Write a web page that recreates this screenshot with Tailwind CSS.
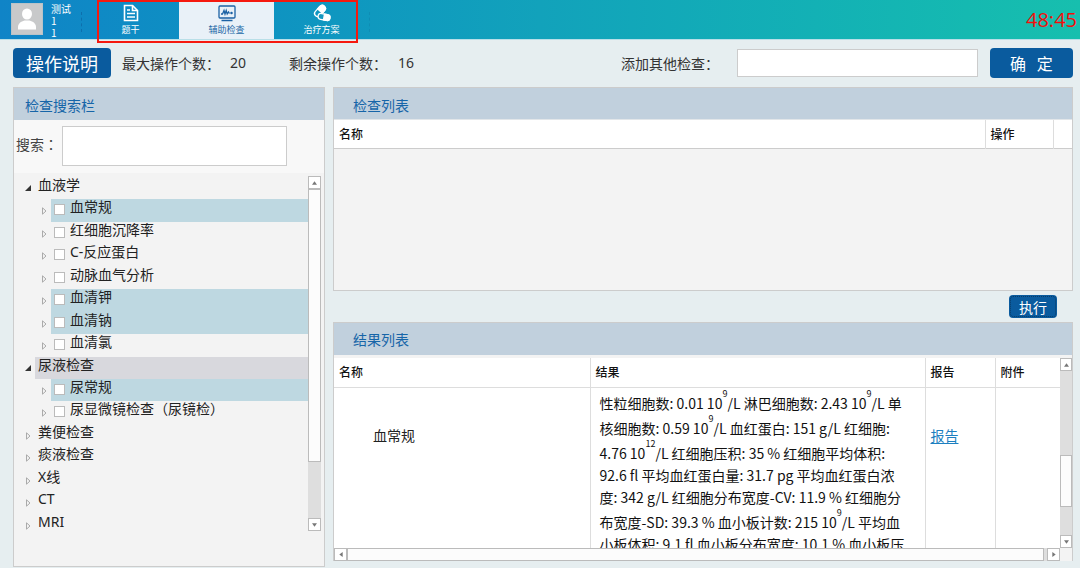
<!DOCTYPE html>
<html lang="zh-CN">
<head>
<meta charset="utf-8">
<meta name="viewport" content="width=device-width, initial-scale=1">
<title>辅助检查</title>
<script src="https://cdn.jsdelivr.net/npm/@tailwindcss/browser@4"></script>
</head>
<body class="min-h-screen bg-[#e6eef0] font-['Noto_Sans_CJK_SC',sans-serif] text-sm text-[#222]">
<header class="flex h-10 items-start border-b border-[#b9dfe8] bg-linear-to-r from-[#1084c7] via-[#12a2bb] to-[#17bfae]">
  <div class="ml-[11px] mt-[3px] h-8 w-8 shrink-0 border border-[#b9c3c8] bg-[#c8c9ca]">
    <svg viewBox="0 0 30 30" class="h-full w-full" fill="#fff" role="img" aria-label="头像"><ellipse cx="15" cy="10" rx="5" ry="5.5"/><path d="M6 25.500v-2.500c0-3.500 3-5.500 6.500-6.500h5c3.500 1 6.500 3 6.500 6.500v2.500z"/></svg>
  </div>
  <div class="ml-2 mt-[3px] w-[30px] text-[10px] leading-3 text-white"><div>测试</div><div>1</div><div>1</div></div>
  <div class="mt-3 h-5 border-l border-dashed border-[#0b5f9d]/60"></div>
  <nav class="relative ml-4 flex h-[39px] text-[9px] leading-3 text-white">
    <a href="#" class="flex w-[81px] flex-col items-center pr-4 pt-1">
      <svg viewBox="0 0 16 18" class="mb-0.5 h-[18px] w-4" fill="none" stroke="#fff" stroke-width="1.600"><path d="M1.500 1.500h8l5 5v10h-13z"/><path d="M9.500 1.500v5h5M4 6h3M4 9.500h8M4 13h8"/></svg>
      <span>题干</span></a>
    <a href="#" aria-current="page" class="flex w-[95px] flex-col items-center bg-[#e9f1f8] pt-1 text-[#2468a6]">
      <svg viewBox="0 0 18 18" class="mb-0.5 h-[18px] w-[18px]" fill="none" stroke="#1c62a4" stroke-width="1.300"><rect x="1" y="2" width="16" height="12" rx="1"/><path d="M3 10h1.500L6 6.500 7 10l1.200-3.500 1 3.500L10.500 8l1 1.500"/><circle cx="13.500" cy="9" r=".6"/><path d="M3.500 16.500h11" stroke-width="1.500"/></svg>
      <span>辅助检查</span></a>
    <a href="#" class="flex w-[95px] flex-col items-center pt-1">
      <svg viewBox="0 0 20 18" class="mb-0.5 h-[18px] w-5" fill="none" stroke="#fff" stroke-width="1.300"><g transform="rotate(-48 8 7)"><rect x="1.500" y="3.800" width="13" height="6.400" rx="3.200"/><path d="M8 3.800h3.300a3.200 3.200 0 0 1 0 6.400H8z" fill="#fff"/></g><g transform="rotate(10 12 13)"><rect x="6" y="10" width="12" height="6" rx="3" fill="#1698c0"/><path d="M12 10h3a3 3 0 0 1 0 6h-3z" fill="#fff"/></g></svg>
      <span>治疗方案</span></a>
    <div class="pointer-events-none absolute -left-px top-0 h-[43px] w-[261px] border-2 border-[#f5190f]"></div>
  </nav>
  <div class="mt-3 h-5 border-l border-dashed border-[#0e86ad]/60"></div>
  <time class="ml-auto mr-[3px] mt-1 font-['Open_Sans','Noto_Sans_CJK_SC',sans-serif] text-xl leading-8 text-[#f40e0a]">48:45</time>
</header>

<div class="flex h-[47px] items-center pb-0.5 pl-[13px] pr-[7px] text-[#333]">
  <button type="button" class="h-[30px] w-[98px] shrink-0 rounded bg-[#0a5b9e] text-lg leading-7 text-white">操作说明</button>
  <span class="ml-[11px] w-[108px]">最大操作个数：</span><span class="w-[59px] font-['Noto_Sans',sans-serif]">20</span>
  <span class="w-[109px]">剩余操作个数：</span><span class="font-['Noto_Sans',sans-serif]">16</span>
  <label for="other" class="ml-auto w-[116px]">添加其他检查：</label>
  <input id="other" type="text" class="h-7 w-[241px] border border-[#ccc] bg-white px-2">
  <button type="button" class="ml-3 h-[30px] w-[83px] shrink-0 rounded bg-[#0a5b9e] text-base leading-7 text-white">确&nbsp;&nbsp; 定</button>
</div>

<main class="flex gap-2 pb-px pl-[13px] pr-[7px]">
  <section class="flex h-[480px] w-[312px] shrink-0 flex-col border border-[#ccc] bg-[#f3f3f3]">
    <h2 class="h-8 shrink-0 bg-[#c1d0dd] pl-[11px] pt-[3px] leading-7 text-[#1665a8]">检查搜索栏</h2>
    <div class="flex h-[53px] shrink-0 items-start bg-[#f8f8f8] pl-0.5 pt-[6px] text-[#444]">
      <label for="search" lang="zh-TW" class="w-[46px] whitespace-nowrap font-['Noto_Sans_CJK_TC',sans-serif] leading-9">搜索：</label>
      <input id="search" type="text" class="h-10 w-[225px] border border-[#ccc] bg-white px-2">
    </div>
    <div class="flex pl-[7px] pr-[3px] pt-[3px]">
      <ul id="tree" class="mt-px flex h-[359px] flex-1 flex-col font-['Noto_Sans','Noto_Sans_CJK_SC',sans-serif]"></ul>
      <div class="flex h-[355px] w-[13px] flex-col bg-[#dedede]">
        <button type="button" aria-label="向上" class="flex h-[13px] items-center justify-center border border-[#bbb] bg-white"><svg viewBox="0 0 6 4" class="h-1 w-[5px]" fill="#777"><path d="M0 4l3-4 3 4z"/></svg></button>
        <div class="h-[273px] border border-[#bbb] bg-[#fcfcfc]"></div>
        <button type="button" aria-label="向下" class="mt-auto flex h-[13px] items-center justify-center border border-[#bbb] bg-white"><svg viewBox="0 0 6 4" class="h-1 w-[5px]" fill="#777"><path d="M0 0h6l-3 4z"/></svg></button>
      </div>
    </div>
  </section>

  <div class="min-w-0 flex-1">
    <section class="h-[204px] border border-[#ccc] bg-[#f3f3f3]">
      <h2 class="h-8 border-b border-[#e2e6e9] bg-[#c1d0dd] pl-[19px] pt-[3px] leading-7 text-[#1665a8]">检查列表</h2>
      <table class="w-full table-fixed border-collapse bg-white text-left text-xs text-[#111]">
        <thead><tr class="h-7 border-b border-[#ccc]">
          <th scope="col" class="pl-[5px] font-medium">名称</th>
          <th scope="col" class="w-[68px] border-x border-[#ddd] pl-[5px] font-medium">操作</th>
          <td class="w-[19px]"></td>
        </tr></thead>
      </table>
    </section>
    <div class="flex h-[31px] justify-end pr-4 pt-1">
      <button type="button" class="h-[23px] w-12 rounded bg-[#0a5b9e] leading-5 text-white outline-1 -outline-offset-2 outline-dotted outline-[#083c68]">执行</button>
    </div>
    <section class="border border-b-0 border-[#ccc] bg-[#f3f3f3]">
      <h2 class="h-8 bg-[#c1d0dd] pl-[19px] pt-0.5 leading-7 text-[#1665a8]">结果列表</h2>
      <div class="mt-[3px] flex">
        <div class="min-w-0 flex-1">
          <div class="h-[190px] overflow-hidden bg-white">
            <table class="w-full table-fixed border-collapse text-left">
              <thead><tr class="h-[29px] border-b border-[#ddd] text-xs text-[#111]">
                <th scope="col" class="w-[256px] pl-[5px] font-medium">名称</th>
                <th scope="col" class="border-x border-[#ddd] pl-[5px] font-medium">结果</th>
                <th scope="col" class="w-[70px] border-r border-[#ddd] pl-[5px] font-medium">报告</th>
                <th scope="col" class="w-[65px] pl-[5px] font-medium">附件</th>
              </tr></thead>
              <tbody><tr class="align-top">
                <td class="pl-[39px] pt-[35px] leading-6">血常规</td>
                <td class="whitespace-nowrap border-x border-[#ddd] pl-[9px] pt-px leading-[22px] text-[#111]">
                  <div class="pt-[3px]">性粒细胞数: 0.01 10<sup class="-top-3 text-[9px]">9</sup>/L 淋巴细胞数: 2.43 10<sup class="-top-3 text-[9px]">9</sup>/L 单</div>
                  <div class="pt-[3px]">核细胞数: 0.59 10<sup class="-top-3 text-[9px]">9</sup>/L 血红蛋白: 151 g/L 红细胞:</div>
                  <div class="pt-[3px]">4.76 10<sup class="-top-3 text-[9px]">12</sup>/L 红细胞压积: 35 % 红细胞平均体积:</div>
                  <div>92.6 fl 平均血红蛋白量: 31.7 pg 平均血红蛋白浓</div>
                  <div>度: 342 g/L 红细胞分布宽度-CV: 11.9 % 红细胞分</div>
                  <div class="pt-[3px]">布宽度-SD: 39.3 % 血小板计数: 215 10<sup class="-top-3 text-[9px]">9</sup>/L 平均血</div>
                  <div>小板体积: 9.1 fl 血小板分布宽度: 10.1 % 血小板压</div>
                </td>
                <td class="border-r border-[#ddd] pl-[5px] pt-[35px] leading-6"><a href="#" class="text-[#1c7fc0] underline underline-offset-2">报告</a></td>
                <td></td>
              </tr></tbody>
            </table>
          </div>
          <div class="flex h-[13px] bg-[#dedede]">
            <button type="button" aria-label="向左" class="flex w-[13px] items-center justify-center border border-[#bbb] bg-white"><svg viewBox="0 0 4 6" class="h-[5px] w-1" fill="#777"><path d="M4 0v6L0 3z"/></svg></button>
            <div class="mr-[3px] flex-1 border border-[#bbb] bg-[#fcfcfc]"></div>
            <button type="button" aria-label="向右" class="flex w-[13px] items-center justify-center border border-[#bbb] bg-white"><svg viewBox="0 0 4 6" class="h-[5px] w-1" fill="#777"><path d="M0 0v6l4-3z"/></svg></button>
          </div>
        </div>
        <div class="flex h-[190px] w-3 flex-col bg-[#dedede]">
          <button type="button" aria-label="向上" class="flex h-[13px] items-center justify-center border border-[#bbb] bg-white"><svg viewBox="0 0 6 4" class="h-1 w-[5px]" fill="#777"><path d="M0 4l3-4 3 4z"/></svg></button>
          <div class="mt-[84px] h-[52px] border border-[#bbb] bg-[#fcfcfc]"></div>
          <button type="button" aria-label="向下" class="mt-auto flex h-[13px] items-center justify-center border border-[#bbb] bg-white"><svg viewBox="0 0 6 4" class="h-1 w-[5px]" fill="#777"><path d="M0 0h6l-3 4z"/></svg></button>
        </div>
      </div>
    </section>
  </div>
</main>

<script>
// Each entry: [label, kind, background]; kind is open, closed or leaf.
const rows = [
  ['血液学', 'open', ''], ['血常规', 'leaf', 'bg-[#bed8e1]'], ['红细胞沉降率', 'leaf', ''],
  ['C-反应蛋白', 'leaf', ''], ['动脉血气分析', 'leaf', ''], ['血清钾', 'leaf', 'bg-[#bed8e1]'],
  ['血清钠', 'leaf', 'bg-[#bed8e1]'], ['血清氯', 'leaf', ''], ['尿液检查', 'open', 'bg-[#d8d8dd]'],
  ['尿常规', 'leaf', 'bg-[#bed8e1]'], ['尿显微镜检查（尿镜检）', 'leaf', ''],
  ['粪便检查', 'closed', ''], ['痰液检查', 'closed', ''], ['X线', 'closed', ''], ['CT', 'closed', ''], ['MRI', 'closed', '']
];
document.getElementById('tree').innerHTML = rows.map(([label, kind, bg], i) => {
  const leaf = kind === 'leaf';
  const arrow = kind === 'open'
    ? '<svg viewBox="0 0 6 6" class="mt-2 h-[6px] w-[14px]" fill="#333"><path d="M6 0v6H0z"/></svg>'
    : '<svg viewBox="0 0 6 8" class="mt-2 h-2 w-[14px]" fill="none" stroke="#aaa"><path d="M1.500 .8v6.400L5 4z"/></svg>';
  const body = leaf
    ? `<div class="flex flex-1 ${bg}"><input id="t${i}" type="checkbox" class="ml-[3px] mr-[5px] mt-[5px] h-[11px] w-[11px] appearance-none border border-[#bbb] bg-white"><label for="t${i}" class="leading-4">${label}</label></div>`
    : `<div class="flex-1 pl-[3px] leading-4 ${bg}">${label}</div>`;
  return `<li class="flex min-h-0 flex-1 ${leaf ? 'pl-[16px]' : ''}">${arrow}${body}</li>`;
}).join('');
</script>
</body>
</html>
